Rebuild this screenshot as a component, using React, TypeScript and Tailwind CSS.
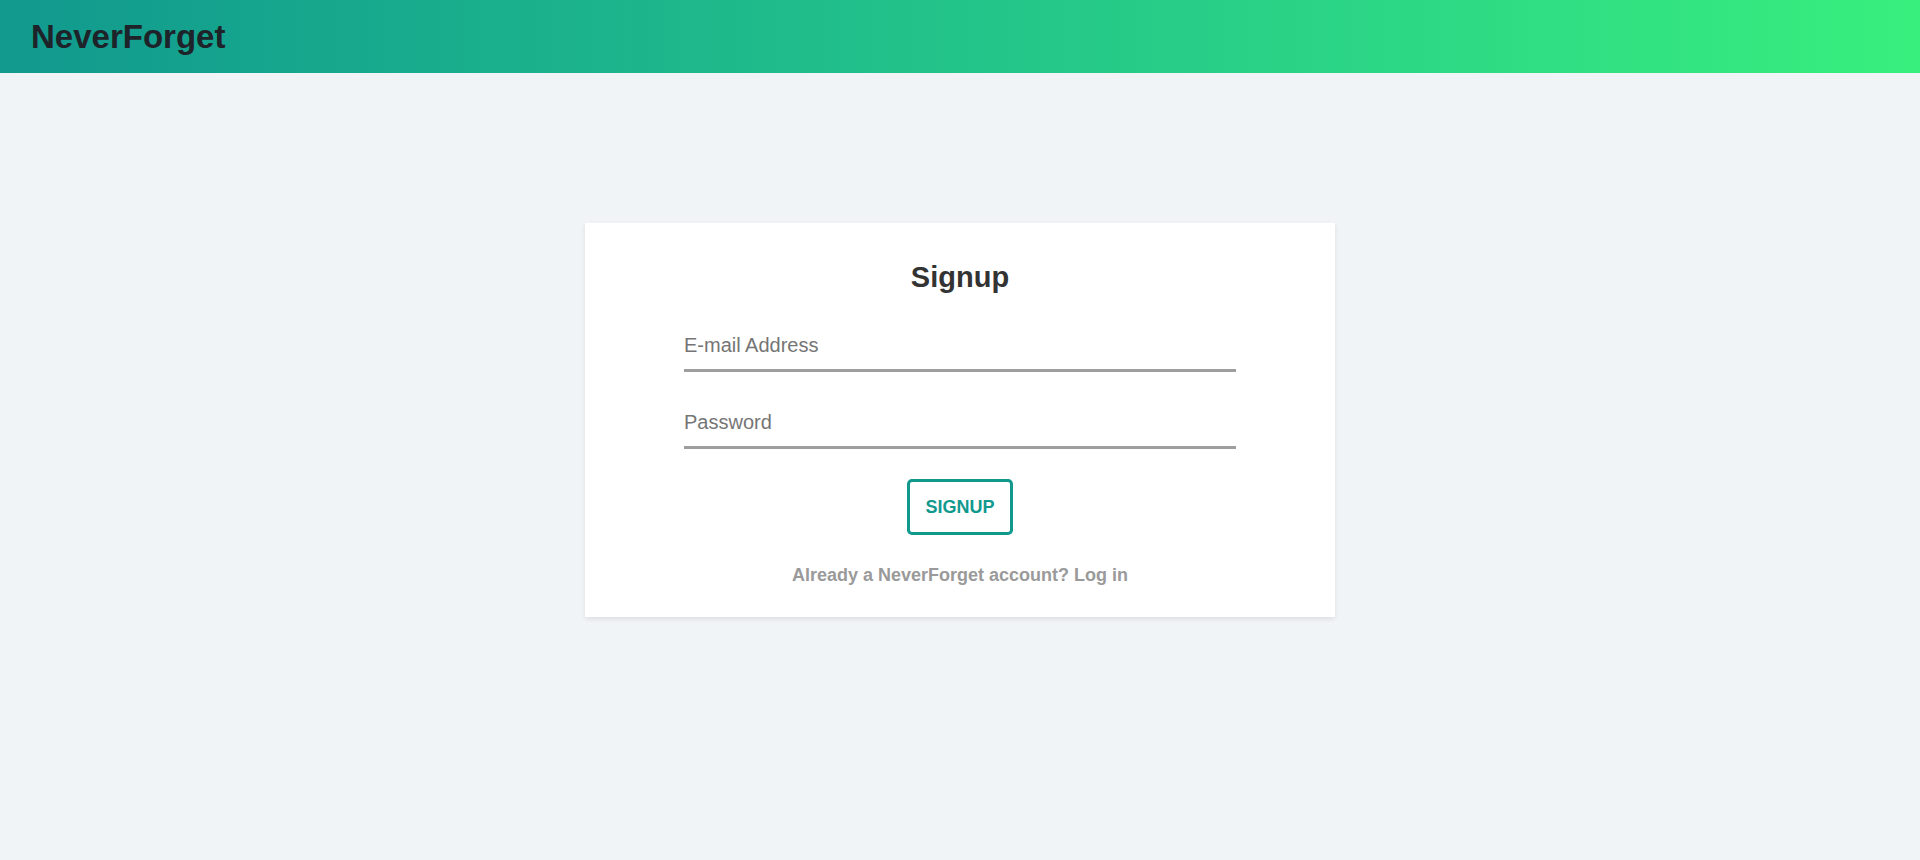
import React from "react";

export default function App() {
  return (
    <div
      className="min-h-[860px] w-full bg-[#f0f4f7]"
      style={{ fontFamily: '"Liberation Sans", Arial, sans-serif' }}
    >
      <header className="flex h-[73px] items-center bg-gradient-to-r from-[#11998e] to-[#38ef7d] px-[31px]">
        <h1 className="text-[33px] font-bold leading-none text-[#1e2329]">NeverForget</h1>
      </header>
      <main className="flex justify-center pt-[150px]">
        <div className="flex w-[750px] flex-col items-center bg-white pt-[38px] pb-[32px] shadow-[0_2px_5px_rgba(0,0,0,0.09)]">
          <h2 className="text-[29px] font-bold leading-[32px] text-[#333333]">Signup</h2>
          <div className="mt-[40px] w-[552px]">
            <div className="border-b-[3px] border-[#9e9e9e] pb-[12px] text-[20px] leading-[24px] text-[#757575]">
              E-mail Address
            </div>
          </div>
          <div className="mt-[38px] w-[552px]">
            <div className="border-b-[3px] border-[#9e9e9e] pb-[12px] text-[20px] leading-[24px] text-[#757575]">
              Password
            </div>
          </div>
          <button className="mt-[30px] flex h-[56px] w-[106px] items-center justify-center rounded-[5px] border-[3px] border-[#11998e] bg-white text-[18px] font-bold leading-[20px] text-[#11998e]">
            SIGNUP
          </button>
          <p className="mt-[30px] text-[18px] font-bold leading-[20px] text-[#9a9a9a]">
            Already a NeverForget account? Log in
          </p>
        </div>
      </main>
    </div>
  );
}
